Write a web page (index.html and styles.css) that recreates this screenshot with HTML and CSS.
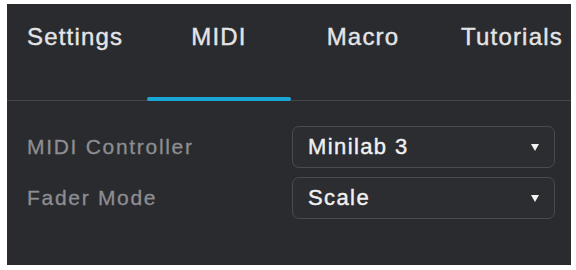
FILE: index.html
```html
<!DOCTYPE html>
<html>
<head>
<meta charset="utf-8">
<link rel="stylesheet" href="styles.css">
</head>
<body>
<div class="panel">
  <div class="tabs">
    <div class="tab tab-first">Settings</div>
    <div class="tab tab-active">MIDI<span class="indicator"></span></div>
    <div class="tab">Macro</div>
    <div class="tab tab-last">Tutorials</div>
  </div>
  <div class="form">
    <div class="row">
      <div class="label">MIDI Controller</div>
      <div class="select">
        <span class="value">Minilab 3</span>
        <svg class="caret" width="8" height="7" viewBox="0 0 8 7"><path d="M0 0 H8 L4 7 Z" fill="#f2f2f2"/></svg>
      </div>
    </div>
    <div class="row">
      <div class="label">Fader Mode</div>
      <div class="select">
        <span class="value">Scale</span>
        <svg class="caret" width="8" height="7" viewBox="0 0 8 7"><path d="M0 0 H8 L4 7 Z" fill="#f2f2f2"/></svg>
      </div>
    </div>
  </div>
</div>
</body>
</html>
```
FILE: styles.css
```css
html, body {
  margin: 0;
  padding: 0;
  background: #ffffff;
}
body {
  font-family: "Liberation Sans", Arial, sans-serif;
}
.panel {
  margin: 4px 0 0 7px;
  width: 564px;
  height: 261px;
  background: #2a2b2f;
  overflow: hidden;
}
.tabs {
  display: grid;
  grid-template-columns: 140px 144px 144px 1fr;
  height: 96px;
  border-bottom: 1px solid #45474b;
}
.tab {
  position: relative;
  padding-top: 19px;
  font-size: 24px;
  line-height: 28px;
  letter-spacing: 1.2px;
  color: #e4e4e6;
  -webkit-text-stroke: 0.4px #e4e4e6;
  text-align: center;
  white-space: nowrap;
}
.tab-first {
  text-align: left;
  padding-left: 20px;
}
.tab-last {
  text-align: left;
  padding-left: 26px;
}
.indicator {
  position: absolute;
  left: 0;
  right: 0;
  bottom: -1px;
  height: 4px;
  border-radius: 2px;
  background: #1ca6d8;
  -webkit-text-stroke: 0;
}
.form {
  padding: 25px 16px 0 20px;
  display: flex;
  flex-direction: column;
  gap: 9px;
}
.row {
  display: flex;
  align-items: center;
  justify-content: space-between;
}
.label {
  font-size: 21px;
  letter-spacing: 1.7px;
  color: #8d8e92;
  -webkit-text-stroke: 0.3px #8d8e92;
}
.select {
  box-sizing: border-box;
  width: 263px;
  height: 42px;
  border: 1px solid #4a4b50;
  border-radius: 7px;
  background: #2c2d31;
  display: flex;
  align-items: center;
  justify-content: space-between;
  padding: 0 15px 0 15px;
}
.value {
  font-size: 22px;
  letter-spacing: 1.4px;
  color: #f0f0f1;
  -webkit-text-stroke: 0.4px #f0f0f1;
}
.caret {
  display: block;
}
```
